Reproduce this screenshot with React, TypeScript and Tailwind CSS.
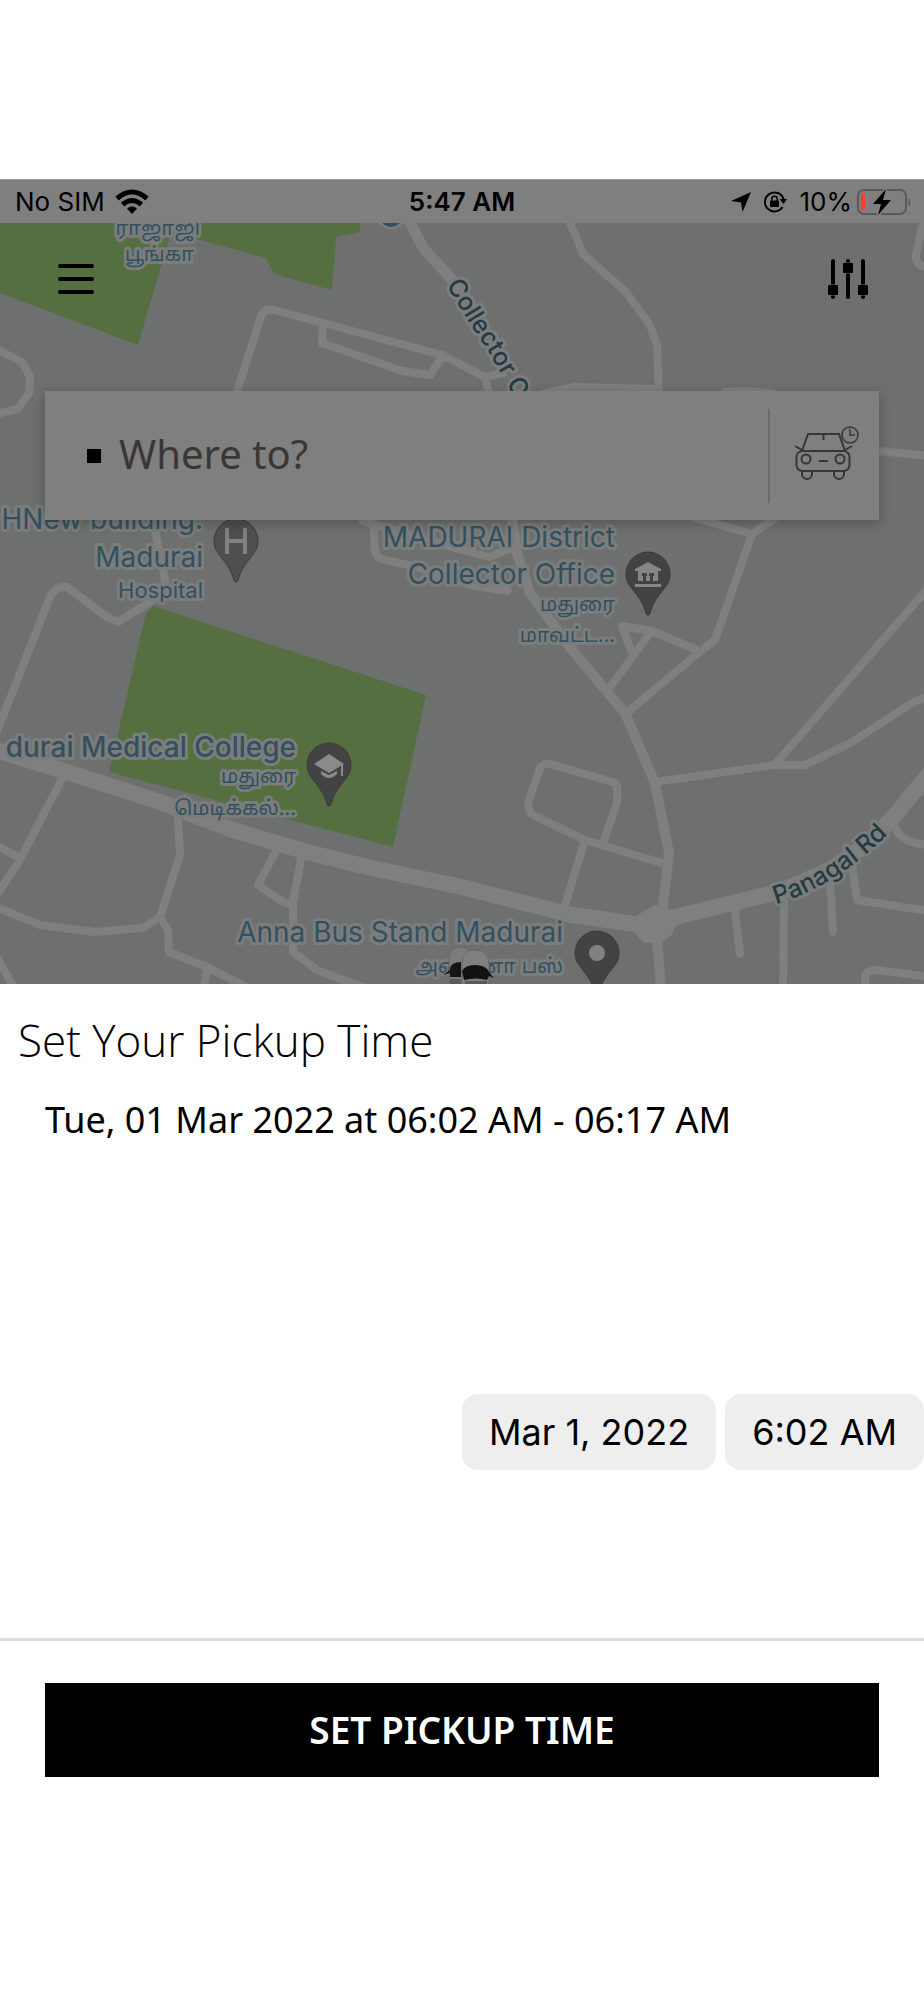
import React from "react";

const halo = {
  paintOrder: "stroke" as const,
  stroke: "#7b7d7d",
  strokeWidth: 6,
  strokeLinejoin: "round" as const,
};

function Pin({ x, y, fill = "#434343", children }: { x: number; y: number; fill?: string; children?: React.ReactNode }) {
  return (
    <g transform={`translate(${x} ${y})`}>
      <path
        d="M0 41C-2 41-2 39-3 36C-6 26-13 19-18 12C-21 8-22 4-22 0A22 22 0 0 1 22 0C22 4 21 8 18 12C13 19 6 26 3 36C2 39 2 41 0 41Z"
        fill={fill}
        stroke="#3a3a3a"
        strokeWidth="1"
      />
      {children}
    </g>
  );
}

function CityMap() {
  return (
    <svg
      className="absolute inset-0 h-full w-full"
      viewBox="0 223 924 761"
      preserveAspectRatio="xMidYMid slice"
      role="img"
      aria-label="Map of Madurai"
    >
      <rect x="0" y="223" width="924" height="761" fill="#6e7070" />
      <g fill="#556f40">
        <path d="M0 223H360V232L336 237L332 290L274 274L266 258L197 239L171 232L138 345L0 293Z" />
        <path d="M153 606L146 613L109 772L393 847L426 695Z" />
      </g>
      <g fill="none" stroke="#7f7f7f" strokeWidth="8" strokeLinejoin="round" strokeLinecap="round">
        <path d="M-4 349L22 362L30 377L29 393L18 409L-4 414" />
        <path d="M236 395L261 316Q264 308 274 310L323 323L442 355L485 377L503 373M485 377L489 395" />
        <path d="M323 323L322 343L402 371L430 375L442 357" />
        <path d="M569 220L583 254L626 292L650 325L657 345L659 395" />
        <path d="M545 393L575 387L657 389M725 392L745 391L772 393" />
        <path d="M924 218L916 255Q915 264 926 268" />
        <path d="M878 451L928 456" />
        <path d="M695 518L752 534L774 519M752 534L715 640L697 654L629 711" />
        <path d="M697 650L652 631L622 626L632 653M650 633L608 690" />
        <path d="M363 521L462 550L489 557L512 548M373 521L375 550Q376 558 385 560L417 567L470 585L508 591" />
        <path d="M928 588L777 762M928 696L912 703L852 742L805 765H774L655 782" />
        <path d="M604 840L617 803V787Q617 783 612 782L550 764Q545 762 540 768L529 800Q527 811 533 815L585 840L665 864M585 840L565 905" />
        <path d="M735 910L740 954M784 900L783 988M830 880L833 932M852 865L857 900L928 911" />
        <path d="M893 822Q898 843 928 845M865 988V976Q865 971 878 970L928 977" />
        <path d="M-4 734L50 597Q54 586 67 587L107 617L118 622L153 600M153 520L167 590" />
        <path d="M63 777L20 860L-4 896M-4 845L18 857" />
        <path d="M-4 907L40 925L95 932L143 928L160 917L180 855L178 817" />
        <path d="M160 917L168 930L169 952L207 967L248 988M207 970L204 988M-4 955L14 988" />
        <path d="M278 847L258 885L283 902L293 905M302 853L293 903V952L317 970L365 988" />
      </g>
      <g fill="none" stroke="#7f7f7f" strokeLinejoin="round">
        <path d="M408 218L423 248L450 277L467 302" strokeWidth="11" />
        <path d="M512 518L517 553L530 593L572 650L625 713L655 783L669 853L662 915L657 940L661 988" strokeWidth="10" />
        <path d="M-10 748L67 772L160 802L233 830L307 852L367 867L462 887L572 915L642 925L745 900L779 892L829 870Q860 852 889 822L934 768" strokeWidth="16" />
      </g>
      <path d="M634 917L655 905L666 908L679 917L672 935L662 942L644 943L634 932Z" fill="#7f7f7f" />
      <path d="M380 221Q391 233 402 221Z" fill="#34505f" stroke="#7f7f7f" strokeWidth="5" paintOrder="stroke" />
      <path d="M387 221Q391 224 396 221Z" fill="#7f7f7f" />

      <defs>
        <path id="collector-road" d="M446 285L470 324Q494 358 518 405" />
        <path id="panagal-road" d="M776 904Q840 886 900 822" />
      </defs>

      <g fontFamily="Inter, 'Noto Sans Tamil', sans-serif" fill="#34505f" textAnchor="end" {...halo}>
        <g fontSize="28">
          <text x="203" y="529">HNew building:</text>
          <text x="203" y="567">Madurai</text>
          <text x="615" y="547">MADURAI District</text>
          <text x="615" y="584">Collector Office</text>
          <text x="296" y="757" fontWeight="500">durai Medical College</text>
          <text x="563" y="942">Anna Bus Stand Madurai</text>
        </g>
        <g fontSize="22">
          <text x="203" y="598">Hospital</text>
        </g>
        <g fontSize="20">
          <text x="200" y="235">ராஜாஜி</text>
          <text x="194" y="261">பூங்கா</text>
          <text x="615" y="611">மதுரை</text>
          <text x="615" y="642">மாவட்ட...</text>
          <text x="296" y="783">மதுரை</text>
          <text x="296" y="815">மெடிக்கல்...</text>
          <text x="563" y="973">அண்ணா பஸ்</text>
        </g>
      </g>
      <g fontFamily="Inter, sans-serif" fontSize="25" fontWeight="500" fill="#243a44" {...halo}>
        <text>
          <textPath href="#collector-road">Collector O</textPath>
        </text>
        <text>
          <textPath href="#panagal-road">Panagal Rd</textPath>
        </text>
      </g>

      <Pin x={236} y={541} fill="#4f4f4f">
        <path d="M-9 -13V13M9 -13V13M-9 0H9" stroke="#818181" strokeWidth="4" fill="none" />
      </Pin>
      <Pin x={648} y={574}>
        <path d="M-13 -5L0 -12L13 -5V-3H-13ZM-10 -3H10V7H-10ZM-13 10H13V13H-13Z" fill="#858585" />
        <path d="M-6 -1H-1V2H-2V8H-5V2H-6ZM1 -1H6V2H5V8H2V2H1Z" fill="#434343" />
      </Pin>
      <Pin x={329} y={765}>
        <path d="M-15 -1L0 -11L15 -1L0 8ZM-8 6L0 10L8 6V9Q0 17 -8 9ZM12 0H14V11H12Z" fill="#8a8a8a" />
      </Pin>
      <Pin x={597} y={953}>
        <circle r="8" fill="#818181" />
      </Pin>

      <g>
        <path d="M449 986V958Q450 947 460 947Q470 946 472 958V986Z" fill="#7c7c7c" stroke="#676767" strokeWidth="1" />
        <path d="M443 975L450 970Q450 962 461 962V977H450V973Z" fill="#151515" />
        <path d="M462 986V962Q463 950 475 950Q488 950 489 963V986Z" fill="#808080" stroke="#676767" strokeWidth="1" />
        <path d="M462 971Q465 965 475 965Q486 965 489 972L494 978L489 976L487 980Q476 977 464 980Z" fill="#121212" />
        <path d="M450 979H461V984H450ZM465 981H487V984H465Z" fill="#5a5a5a" />
      </g>
    </svg>
  );
}

function StatusBar() {
  return (
    <header className="relative flex h-11 items-center justify-between border-t border-[#9a9a9a] bg-[#7f7f7f] pl-[15px] pr-3 text-[26px] leading-8 text-black">
      <div className="flex items-center gap-[10px]">
        <span>No SIM</span>
        <svg className="h-[26px] w-[34px]" viewBox="0 0 34 26" aria-label="Wi-Fi">
          <g fill="none" stroke="#000" strokeWidth="5">
            <path d="M2 9.500Q17 -3.500 32 9.500" />
            <path d="M7.500 15.500Q17 7.500 26.500 15.500" />
          </g>
          <path d="M12 19.500Q17 15.500 22 19.500L17 25Z" />
        </svg>
      </div>
      <span className="absolute left-1/2 -translate-x-1/2 font-semibold">5:47 AM</span>
      <div className="flex items-center">
        <svg className="mr-3 h-5 w-5" viewBox="0 0 20 20" aria-label="Location">
          <path d="M20 0L11.500 20L10 10.500L0 9Z" />
        </svg>
        <svg className="mr-3 h-6 w-6" viewBox="0 0 24 24" aria-label="Rotation lock">
          <path d="M19.500 17A9.500 9.500 0 1 1 20.500 9" fill="none" stroke="#000" strokeWidth="2" />
          <path d="M16.500 9H24L20.500 14Z" />
          <rect x="7" y="10.500" width="9" height="6.500" rx="1" />
          <path d="M8.800 11V9A2.700 2.700 0 0 1 14.200 9V11" fill="none" stroke="#000" strokeWidth="1.500" />
        </svg>
        <span>10%</span>
        <svg className="ml-1 h-7 w-14" viewBox="0 0 56 28" aria-label="Battery charging">
          <rect x="2" y="2" width="48" height="24" rx="6" fill="none" stroke="#5a5a5a" strokeWidth="2" />
          <path d="M53 11Q55 14 53 18Z" fill="#5a5a5a" stroke="#5a5a5a" />
          <rect x="5" y="6" width="4" height="16" rx="1.500" fill="#ff3b30" />
          <path d="M30 1L17 16H25L22 27L35 12H27Z" stroke="#7f7f7f" strokeWidth="3" paintOrder="stroke" />
        </svg>
      </div>
    </header>
  );
}

function RideLaterIcon() {
  return (
    <svg className="h-14 w-[66px]" viewBox="0 0 66 56" fill="none" stroke="#3a3636" strokeWidth="2" aria-hidden="true">
      <path d="M8 25L14 8H45L51 25" />
      <path d="M29.500 8V14M1 20L8 24M58 20L51 24M25 35H34" />
      <rect x="2.500" y="25" width="53" height="20" rx="6" />
      <circle cx="12" cy="33" r="4.500" />
      <circle cx="46" cy="33" r="4.500" />
      <path d="M8 45V48A5 5 0 0 0 18 48V45M40 45V48A5 5 0 0 0 50 48V45" />
      <circle cx="56" cy="9" r="8" fill="#7f7f7f" strokeWidth="1.500" />
      <path d="M56 3V9H61" strokeWidth="1.500" />
    </svg>
  );
}

export default function App() {
  return (
    <div className="min-h-screen bg-white pt-[179px] font-['Inter',sans-serif] text-black">
      <StatusBar />

      <section className="relative h-[761px] overflow-hidden">
        <CityMap />
        <div className="relative flex items-start justify-between px-14 pt-9">
          <button type="button" aria-label="Open menu" className="flex h-10 w-10 items-center justify-center">
            <svg className="h-8 w-9" viewBox="0 0 36 32" stroke="#000" strokeWidth="4" strokeLinecap="round">
              <path d="M2 3H34M2 16H34M2 29H34" />
            </svg>
          </button>
          <button type="button" aria-label="Ride preferences" className="flex h-10 w-10 items-center justify-center">
            <svg className="h-10 w-10" viewBox="0 0 40 40">
              <path d="M5 2V38M20 2V38M35 2V38" stroke="#000" strokeWidth="4" strokeLinecap="round" />
              <path d="M1 26H9Q10 26 10 27V35Q10 36 9 36H1Q0 36 0 35V27Q0 26 1 26ZM16 4H24Q25 4 25 5V13Q25 14 24 14H16Q15 14 15 13V5Q15 4 16 4ZM31 26H39Q40 26 40 27V35Q40 36 39 36H31Q30 36 30 35V27Q30 26 31 26Z" stroke="#6e7070" strokeWidth="1" paintOrder="stroke" />
            </svg>
          </button>
        </div>

        <div className="relative mx-[45px] mt-[92px] flex h-[129px] items-center bg-[#7f7f7f] shadow-[0_3px_12px_rgba(0,0,0,0.25)]">
          <label htmlFor="destination" className="ml-[42px] h-[14px] w-[14px] bg-black" aria-label="Destination" />
          <input
            id="destination"
            type="text"
            placeholder="Where to?"
            className="ml-[18px] min-w-0 flex-1 bg-transparent pb-1 font-['Noto_Sans',sans-serif] text-[40px] text-[#3a3636] outline-none placeholder:text-[#3a3636]"
          />
          <button
            type="button"
            aria-label="Schedule a ride"
            className="flex h-[94px] w-[111px] items-center justify-center border-l-2 border-[#6a6a6a] pb-1 pl-1"
          >
            <RideLaterIcon />
          </button>
        </div>
      </section>

      <main>
        <div className="font-['Open_Sans',sans-serif]">
          <h1 className="px-[18px] pt-[26px] text-[44px] leading-[60px] font-light">Set Your Pickup Time</h1>
          <p className="px-[45px] pt-5 font-['Noto_Sans',sans-serif] text-[36px] leading-[60px]">
            Tue, 01 Mar 2022 at 06:02 AM - 06:17 AM
          </p>
        </div>
        <div className="mt-[244px] flex justify-end gap-[9px] text-[36px]">
          <button type="button" className="h-[76px] rounded-2xl bg-[#eeeeee] px-[27px]">Mar 1, 2022</button>
          <button type="button" className="h-[76px] rounded-2xl bg-[#eeeeee] px-[27px]">6:02 AM</button>
        </div>
        <div className="mt-[168px] border-t-3 border-[#dcdcdc] px-[45px] pt-[42px]">
          <button type="button" className="h-[94px] w-full bg-black font-['Noto_Sans',sans-serif] text-[37px] font-semibold text-white">
            SET PICKUP TIME
          </button>
        </div>
      </main>
    </div>
  );
}
